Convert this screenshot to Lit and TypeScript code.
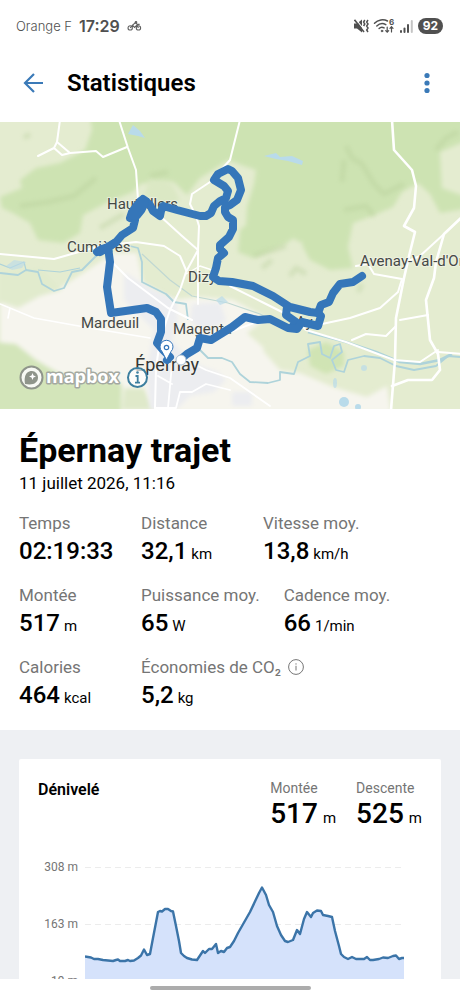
import { LitElement, html, css, svg } from "lit";
import { customElement } from "lit/decorators.js";

interface Stat {
  label: string;
  value: string;
  unit?: string;
  info?: boolean;
}

const STATS: Stat[][] = [
  [
    { label: "Temps", value: "02:19:33" },
    { label: "Distance", value: "32,1", unit: "km" },
    { label: "Vitesse moy.", value: "13,8", unit: "km/h" },
  ],
  [
    { label: "Montée", value: "517", unit: "m" },
    { label: "Puissance moy.", value: "65", unit: "W" },
    { label: "Cadence moy.", value: "66", unit: "1/min" },
  ],
  [
    { label: "Calories", value: "464", unit: "kcal" },
    { label: "Économies de CO₂", value: "5,2", unit: "kg", info: true },
  ],
];

@customElement("status-bar")
class StatusBar extends LitElement {
  static styles = css`
    :host {
      display: flex;
      align-items: center;
      justify-content: space-between;
      height: 52px;
      padding: 0 17px 0 16px;
      font-family: Inter, "Liberation Sans", sans-serif;
      color: #505050;
    }
    .side {
      display: flex;
      align-items: center;
      gap: 7px;
    }
    .right {
      gap: 4px;
    }
    .carrier {
      font-size: 13px;
      font-weight: 300;
    }
    .clock {
      font-size: 16px;
      font-weight: 600;
    }
    .battery {
      width: 25px;
      line-height: 16px;
      border-radius: 8px;
      background: #505050;
      color: #fff;
      font-size: 12px;
      font-weight: 700;
      text-align: center;
    }
    svg {
      display: block;
    }
  `;
  render() {
    return html`
      <div class="side">
        <span class="carrier">Orange F</span>
        <span class="clock">17:29</span>
        <svg width="15" height="12" viewBox="0 0 16 12" fill="none" stroke="#606060" stroke-width="1.2">
          <circle cx="3.4" cy="8" r="2.3" />
          <circle cx="12.2" cy="8" r="2.3" />
          <path d="M3.4 8 6 5l2 2.6 2.6-2.4 1.6 2.8M6 5l3-2.6 2 1.8h2.5" />
          <circle cx="9.6" cy="2" r=".8" fill="#606060" />
        </svg>
      </div>
      <div class="side right">
        <svg width="15" height="16" viewBox="0 0 15 16" fill="none" stroke="#505050">
          <path d="M0 5.500h3L8 1.500v13L3 10.500H0z" fill="#505050" stroke="none" />
          <path d="M1.500.8 11 12.800" stroke="#fff" stroke-width="1.2" />
          <path d="M.5 1.800 10 14" stroke-width="1.6" />
          <path d="m10.800 2-1.200 2 1.200 2-1.200 2M14 2l-1.300 2L14 6l-1.300 2 1.300 2-1.300 2 1.300 2" stroke-width="1.5" />
        </svg>
        <svg width="22" height="16" viewBox="0 0 22 16" fill="none" stroke="#505050" stroke-width="1.5" stroke-linecap="round">
          <path d="M1.500 5.200C5 1.600 10.500 1 14.500 3M3.800 8c2.600-2.600 6.200-3 9-1.400M6.100 10.500c1.400-1.400 3.300-1.600 5-.6" />
          <circle cx="9" cy="13" r=".9" fill="#505050" stroke-width=".6" />
          <path d="M14.200 9v5M12.700 12.600l1.500 1.600 1.500-1.600M18.500 14V8.800M17 10.300l1.500-1.600 1.500 1.600" stroke-width="1.2" />
          <text x="16" y="7" font-size="8" font-weight="700" fill="#505050" stroke="none">6</text>
        </svg>
        <svg width="15" height="16" viewBox="0 0 15 16" fill="#505050">
          <rect x="1" y="12" width="2" height="3" rx="1" />
          <rect x="4.500" y="9.500" width="2" height="5.500" rx="1" />
          <rect x="8" y="6" width="2" height="9" rx="1" />
          <rect x="11.800" y="2" width="2" height="13" rx="1" fill="#c4c4c4" />
        </svg>
        <span class="battery">92</span>
      </div>
    `;
  }
}

const ROUTE =
  "M97 252 102 249 108 247 116 242 122 235 133 228 135 220 130 218 132 212 137 205 143 199 146 201 150 205 153 211 160 216 161 211 163 206 177 210 200 216 206 216 211 213 214 206 220 201 226 198 228 191 224 186 214 180 218 174 228 169 232 171 238 178 241 190 237 200 230 205 225 207 225 212 228 217 233 220 233 229 229 237 220 245 220 249 224 253 218 258 216 268 213 277 219 281 232 282 253 286 273 296 290 307 310 312 318 313 321 305 329 302 333 293 340 284 353 282 362 276";

@customElement("route-map")
class RouteMap extends LitElement {
  static styles = css`
    :host {
      display: block;
      height: 287px;
      overflow: hidden;
    }
    .map {
      display: block;
      width: 100%;
      height: 100%;
      font-family: Roboto, "Open Sans", sans-serif;
    }
    .place {
      font-size: 15px;
      fill: #454846;
      stroke: #f4f5ec;
      stroke-width: 2px;
      stroke-opacity: 0.6;
      paint-order: stroke;
    }
    .city {
      font-size: 18px;
      fill: #333635;
    }
    .brand {
      font-family: "Open Sans", sans-serif;
      font-size: 18px;
      font-weight: 700;
      fill: #fff;
      stroke: #a4a9a1;
      stroke-width: 3px;
      stroke-linejoin: round;
      paint-order: stroke;
    }
  `;
  render() {
    return html`
      <svg class="map" viewBox="0 122 460 287" preserveAspectRatio="xMidYMid slice" role="img" aria-label="Carte du trajet">
        <defs>
          <filter id="soft" x="-5%" y="-5%" width="110%" height="110%"><feGaussianBlur stdDeviation="2" /></filter>
        </defs>
        <rect y="122" width="460" height="287" fill="#e4ecd0" />
        ${this.land()} ${this.water()} ${this.roads()} ${this.labels()}
        <g fill="none" stroke="#3576b9" stroke-width="8" stroke-linecap="round" stroke-linejoin="round">
          <path d=${ROUTE} />
          <path d="M135 214 139 209 142 203" stroke-width="13" />
          <path d="M100 252 115 243M108 247 110 262 107 287 111 313 147 308 156 312 161 319 161 332 157 343 163 350 170 357 167 360M287 307 286 315 296 322 293 326" />
          <path d="M318 313 321 316 318 326 302 322 297 329 288 328 270 319 258 320 245 317 232 327 211 340 200 338 197 348 187 354 181 359" />
        </g>
        <circle cx="181" cy="360" r="5" fill="#fff" stroke="#a9bfd3" />
        <path d="M166.500 360 162 351.500a6.500 6.500 0 1 1 9 0z" fill="#fff" stroke="#3576b9" stroke-width="1" />
        <circle cx="166.500" cy="347.500" r="2.200" fill="none" stroke="#3576b9" stroke-width="1.2" />
        ${this.attribution()}
      </svg>
    `;
  }
  land() {
    return svg`
      <g filter="url(#soft)">
        <path fill="#cde3b2" d="M90 116 92 130 85 150 60 163 36 168 20 180 22 188 0 197 2 208 13 213 30 223 38 240 63 243 80 233 83 215 108 202 133 192 140 184 160 180 174 182 187 195 200 178 213 170 228 160 244 166 256 170 254 184 247 207 246 225 240 230 238 252 253 258 272 250 287 243 294 238 303 247 310 260 330 270 353 268 348 247 353 223 372 216 393 207 402 192 418 183 430 194 440 213 464 209V116z" />
        <path fill="#e4ecd0" d="M440 152 464 142V196L442 188z" />
        <path fill="#dbe8c4" d="M150 178 172 184 180 200 168 206 144 196z" />
        <path fill="#e4ecd0" d="M290 240 302 242 304 258 290 262z" />
        <path fill="#f6f5ee" d="M0 302 20 304 60 288 100 262 112 253 137 253 143 283 173 300 200 297 233 300 267 318 247 333 263 347 264 352 280 370 300 373 333 387 367 397 387 386 391 412H0z" />
        <path fill="#e1ebcd" d="M0 274 40 268 62 290 40 296 18 308 0 302z" />
        <path fill="#d3e5ba" d="M-4 342 16 344 36 360 60 374 104 376 122 384 121 412H-4z" />
        <path fill="#d0e4b4" d="M308 350 326 342 344 352 344 366 326 374 310 366z" />
        <path fill="#dfe9ca" d="M124 388h20l10 22h-32z" />
      </g>
      <g fill="#ecedf0" filter="url(#soft)">
        <path d="M124 272 150 288 176 300 178 320 172 340 190 362 218 372 226 380 214 392 190 396 176 410 150 410 146 370 154 330 124 300z" />
        <path d="M192 304 220 302 226 320 206 336 190 320z" />
        <path d="M232 392h20v14h-20z" />
      </g>
      <g fill="none" stroke="#b5cd98" stroke-width="5" stroke-linejoin="round" opacity=".38" filter="url(#soft)">
        <path d="M346 146 352 158 362 164 374 184 384 194 404 184M344 210 366 206 374 216M344 160 342 182M436 150 446 138 458 132M48 202 74 196 96 178M20 206 48 202M150 176 168 172M254 256 286 246M262 268 272 260M290 276 296 268 306 274M358 292 362 284M100 228 124 214M24 138 30 134" />
      </g>`;
  }
  water() {
    return svg`
      <g fill="none" stroke="#aed3da" stroke-width="1.8" stroke-linejoin="round">
        <path d="M0 273 18 275 26 270 38 272 42 284 54 291 64 288 72 272 82 270 98 254" />
        <path d="M0 264 10 268 24 262 26 270M38 270 60 272 80 268" stroke-width="1.2" />
        <path d="M130 246 138 248 142 262 142 282 154 288 166 294 174 302 186 304 188 320 M200 350 208 358 222 358 232 362 240 374 250 382 268 383 280 380 280 372 294 374 298 362 310 356 308 344 320 342 322 354 330 358 334 346 340 344 342 352 332 360 336 370 344 372 348 360 364 356 380 358 396 366 414 370 436 366 448 356 460 357" />
        <path d="M142 254 170 280 192 296 228 303 260 314 280 324" stroke-width="1.2" stroke="#c0d8d2" />
        <path d="M308 332 346 342 376 352 400 362 420 364 440 360 452 354" stroke-width="2.6" />
      </g>
      <g fill="#b9dbea">
        <path d="M128 134 133 125 140 131 145 138 138 136z" />
        <path d="M264 156 276 153 280 157 292 156 303 161 302 165 288 161 276 159z" />
        <path d="M6 266 14 260 26 262 22 268 12 270z" opacity=".6" />
        <path d="M216 300 222 296 228 302 220 305z" opacity=".7" />
        <circle cx="364" cy="368" r="3" opacity=".7" /><ellipse cx="344" cy="402" rx="5" ry="5" /><ellipse cx="335" cy="383" rx="2" ry="5" opacity=".7" />
        <circle cx="358" cy="407" r="3" />
      </g>`;
  }
  roads() {
    return svg`
      <g fill="none" stroke="#fff" stroke-width="2" stroke-linejoin="round" stroke-linecap="round">
        <path d="M60 120 57 142 70 153 96 151 103 157 127 147" />
        <path d="M57 142 54 148 38 156M54 148 62 155 70 153" />
        <path d="M119 120 128 148 136 170 138 200" />
        <path d="M240 120 230 160 210 182 192 194 190 204 196 216 199 226 198 250 186 272 180 290 170 310 160 340 156 368 155 408" />
        <path d="M198 250 198 304" />
        <path d="M160 216 182 236 198 250" />
        <path d="M392 120 394 150 412 170 416 186 414 208 404 226 415 232 410 252 404 278 396 318 395 360 391 410" stroke-width="2.6" />
        <path d="M462 217 444 234 436 262 434 278 426 300 430 340 438 354 440 370 432 380 408 380 392 386" stroke-width="2.6" />
        <path d="M444 234 420 256 406 262M356 266 368 264 374 274 402 279M402 279 398 292 380 308 350 318 322 324" />
        <path d="M400 320 428 315M352 340 366 334 386 336 396 326M438 352 462 354" />
        <path d="M230 286 262 302 290 316 306 330 346 342 394 360 420 362 438 350" />
        <path d="M0 254 54 259 100 246 136 242 164 246 180 256 186 270" />
        <path d="M110 260 128 278 168 308 192 320M230 332 262 320" />
        <path d="M186 274 200 266 212 270" stroke-width="1.4" />
        <path d="M0 304 34 318 90 328 150 338M8 318 10 308" stroke-width="1.6" />
        <path d="M172 364 168 408M186 360 206 370 230 378 270 406M176 408 180 392 192 392 206 384 230 390M158 376 172 384M155 408 176 408" stroke-width="1.8" />
      </g>`;
  }
  labels() {
    return svg`
      <text class="place" x="107" y="209">Hautvillers</text>
      <text class="place" x="67" y="252">Cumières</text>
      <text class="place" x="188" y="282">Dizy</text>
      <text class="place" x="360" y="266">Avenay-Val-d'Or</text>
      <text class="place" x="81" y="328">Mardeuil</text>
      <text class="place" x="173" y="334">Magenta</text>
      <text class="place" x="296" y="327">Ay</text>
      <text class="place city" x="135" y="371">Épernay</text>`;
  }
  attribution() {
    return svg`
      <g>
        <circle cx="31.500" cy="377.500" r="11" fill="#f8faf5" stroke="#8f958b" stroke-width="2" />
        <path d="M25 384c-1.500-8 1.500-13 7-13a6.300 6.300 0 0 1 6 6.300c0 6-5 8.200-13 6.700z" fill="#8f958b" />
        <path d="m32.500 373 1 2.500 2.500 1-2.500 1-1 2.500-1-2.500-2.500-1 2.500-1z" fill="#fff" />
        <text class="brand" x="46" y="383">mapbox</text>
        <circle cx="137.500" cy="377.500" r="9.500" fill="#fff" fill-opacity=".7" stroke="#3d7f9f" stroke-width="2" />
        <circle cx="137.500" cy="372.500" r="1.300" fill="#3d7f9f" />
        <path d="M135.500 376h2.200v6.500M135 382.700h5" fill="none" stroke="#3d7f9f" stroke-width="1.8" />
      </g>`;
  }
}

// Elevation profile: x runs along the ride, y over the three 57px scale bands.
const PROFILE =
  "0 117.500 3 118 6 118.500 9 120 13 120 18 121 23 121.500 28 122 31 121 33 120.500 35 122 40 122 43 121 45 122 49 121.500 53 119 56 116.500 59 110.500 62 116 65 115 68 99 73 73 75 72 77 72.500 80 70 83 70 86 72 88 72.500 91 87 94 102 96 114 99 117 102 119 107 120.500 112 121 116 115 118 112 120 114 124 110 127 110 131 105 133 114 136 112 139 113 142 109 145 108 149 102 153 94 165 73 174 54 177 48.500 181 56 184 66 188 73 192 87 196 96 200 102 203 103 208 101 212 91 215 95 219 80 222 73 226 78 228 74 232 71.500 236 72 238 76 243 77 247 78 250 92 254 107 256 115 259 118 263 120 267 118 271 120 279 120 282 118 285 121 288 121 294 120 298 118.500 303 119 308 117 311 116.500 314 120 317 119 319 119";

@customElement("elevation-card")
class ElevationCard extends LitElement {
  static styles = css`
    :host {
      display: block;
      padding: 19px;
      border-radius: 2px;
      background: #fff;
    }
    .head {
      display: flex;
      justify-content: space-between;
    }
    h2 {
      margin: 0;
      font-size: 16px;
      line-height: 24px;
      font-weight: 600;
    }
    .totals {
      display: flex;
      gap: 20px;
      margin: 0;
    }
    dt {
      font-size: 14px;
      line-height: 20px;
      color: #757575;
    }
    dd {
      display: flex;
      align-items: baseline;
      gap: 5px;
      margin: 0;
      font-size: 28px;
      line-height: 32px;
      font-weight: 500;
    }
    .unit {
      font-size: 15px;
      line-height: 16px;
      font-weight: 400;
    }
    .chart {
      display: flex;
      gap: 7px;
      margin-top: 9px;
      padding-right: 18px;
    }
    .scale {
      width: 40px;
      font-size: 12px;
      line-height: 57px;
      text-align: right;
      color: #757575;
    }
    .plot {
      flex: 1;
      min-width: 0;
      height: 171px;
    }
  `;
  render() {
    return html`
      <div class="head">
        <h2>Dénivelé</h2>
        <dl class="totals">
          <div><dt>Montée</dt><dd>517 <span class="unit">m</span></dd></div>
          <div><dt>Descente</dt><dd>525 <span class="unit">m</span></dd></div>
        </dl>
      </div>
      <div class="chart">
        <div class="scale"><div>308 m</div><div>163 m</div><div>19 m</div></div>
        <svg class="plot" viewBox="0 0 319 171" preserveAspectRatio="none" role="img" aria-label="Profil de dénivelé">
          <path d="M0 28.500H319M0 85.500H319" stroke="#ececec" stroke-dasharray="6 4" />
          <path d="M${PROFILE}V143H0z" fill="#d5e2fb" />
          <path d="M${PROFILE}" fill="none" stroke="#3b74a8" stroke-width="2.4" stroke-linejoin="round" vector-effect="non-scaling-stroke" />
        </svg>
      </div>
    `;
  }
}

@customElement("app-root")
class AppRoot extends LitElement {
  static styles = css`
    :host {
      display: flex;
      flex-direction: column;
      height: 100vh;
      background: #fff;
      color: #000;
      font-family: Roboto, "Liberation Sans", sans-serif;
    }
    .bar {
      display: flex;
      align-items: center;
      height: 62px;
      margin-bottom: 8px;
      padding: 0 13px;
    }
    .bar button {
      display: grid;
      place-items: center;
      width: 40px;
      height: 40px;
      padding: 0;
      border: 0;
      background: none;
    }
    .bar h1 {
      flex: 1;
      margin: 0 0 0 14px;
      font-size: 24px;
      line-height: 32px;
      font-weight: 600;
    }
    main {
      flex: 1;
      min-height: 0;
      overflow-y: auto;
      scrollbar-width: none;
      background: #eef0f3;
    }
    .summary {
      padding: 20px 19px 19px;
      background: #fff;
    }
    .summary h2 {
      margin: 0;
      font-size: 34px;
      line-height: 42px;
      font-weight: 700;
    }
    .date {
      margin: 0 0 16px;
      font-size: 17px;
      line-height: 24px;
    }
    .stats {
      display: flex;
      flex-direction: column;
      gap: 16px;
      margin: 0;
    }
    .row {
      display: flex;
      gap: 24px;
    }
    .stat {
      min-width: 98px;
    }
    dt {
      display: flex;
      align-items: center;
      gap: 7px;
      font-size: 17px;
      line-height: 24px;
      color: #757575;
    }
    dd {
      display: flex;
      align-items: baseline;
      gap: 4px;
      margin: 0;
      font-size: 24px;
      line-height: 32px;
      font-weight: 500;
    }
    .unit {
      font-size: 15px;
      line-height: 16px;
      font-weight: 400;
    }
    elevation-card {
      margin: 29px 19px;
    }
    .nav {
      display: flex;
      justify-content: center;
      align-items: center;
      height: 18px;
    }
    .handle {
      width: 35%;
      height: 4px;
      border-radius: 2px;
      background: #acacac;
    }
  `;
  render() {
    return html`
      <status-bar></status-bar>
      <header class="bar">
        <button aria-label="Retour">
          <svg width="22" height="22" viewBox="0 0 22 22" fill="none" stroke="#3b7ab8" stroke-width="2.2">
            <path d="M21 11H3M12 2 3 11l9 9" />
          </svg>
        </button>
        <h1>Statistiques</h1>
        <button aria-label="Plus d'options">
          <svg width="6" height="22" viewBox="0 0 6 22" fill="#3b7ab8">
            <circle cx="3" cy="3.500" r="2.600" /><circle cx="3" cy="11" r="2.600" /><circle cx="3" cy="18.500" r="2.600" />
          </svg>
        </button>
      </header>
      <main>
        <route-map></route-map>
        <section class="summary">
          <h2>Épernay trajet</h2>
          <p class="date">11 juillet 2026, 11:16</p>
          <dl class="stats">
            ${STATS.map((row) => html`<div class="row">${row.map((s) => this.stat(s))}</div>`)}
          </dl>
        </section>
        <elevation-card></elevation-card>
      </main>
      <div class="nav"><div class="handle"></div></div>
    `;
  }
  stat(s: Stat) {
    return html`
      <div class="stat">
        <dt>
          ${s.label}
          ${s.info
            ? html`<svg width="16" height="16" viewBox="0 0 16 16" fill="none" stroke="#757575">
                <circle cx="8" cy="8" r="7.4" />
                <path d="M8 6.800v4.700M8 4.300v1.300" />
              </svg>`
            : null}
        </dt>
        <dd>${s.value}${s.unit ? html`<span class="unit">${s.unit}</span>` : null}</dd>
      </div>
    `;
  }
}
